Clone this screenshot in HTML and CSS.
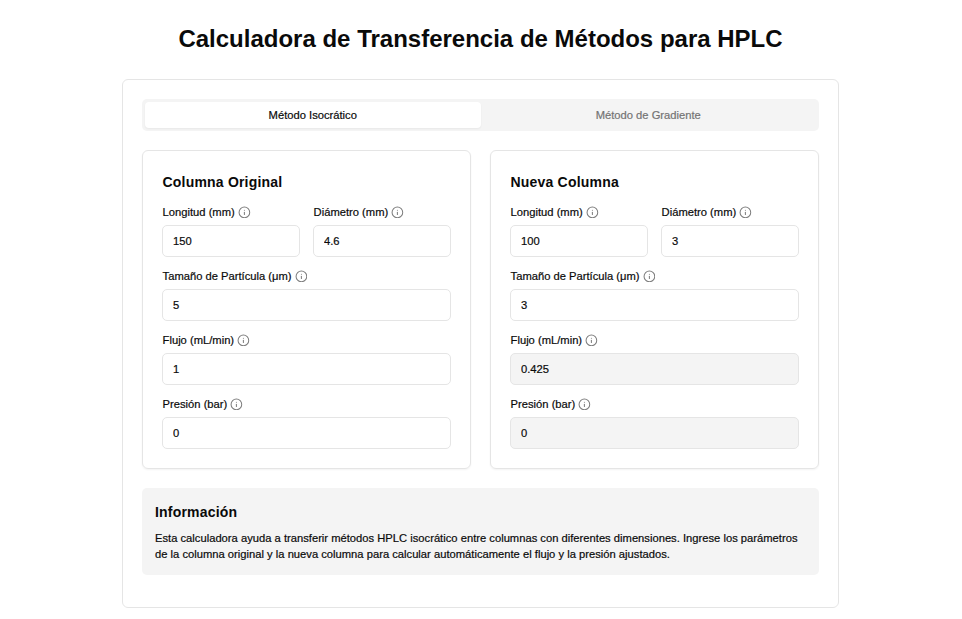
FILE: index.html
```html
<!DOCTYPE html>
<html lang="es">
<head>
<meta charset="utf-8">
<title>Calculadora HPLC</title>
<link rel="stylesheet" href="styles.css">
</head>
<body>
<svg class="sprite" aria-hidden="true"><symbol id="info" viewBox="0 0 24 24"><circle cx="12" cy="12" r="10"/><path d="M12 16v-4"/><path d="M12 8h.01"/></symbol></svg>
<main class="page">
<h1>Calculadora de Transferencia de Métodos para HPLC</h1>
<section class="panel">
<div class="tabs"><button class="tab active">Método Isocrático</button><button class="tab">Método de Gradiente</button></div>
<div class="columns">
<section class="card">
<h2>Columna Original</h2>
<div class="fields">
<div class="pair">
<div class="field"><label>Longitud (mm)<svg class="icon"><use href="#info"/></svg></label><input value="150"></div>
<div class="field"><label>Diámetro (mm)<svg class="icon"><use href="#info"/></svg></label><input value="4.6"></div>
</div>
<div class="field"><label>Tamaño de Partícula (μm)<svg class="icon"><use href="#info"/></svg></label><input value="5"></div>
<div class="field"><label>Flujo (mL/min)<svg class="icon"><use href="#info"/></svg></label><input value="1"></div>
<div class="field"><label>Presión (bar)<svg class="icon"><use href="#info"/></svg></label><input value="0"></div>
</div>
</section>
<section class="card">
<h2>Nueva Columna</h2>
<div class="fields">
<div class="pair">
<div class="field"><label>Longitud (mm)<svg class="icon"><use href="#info"/></svg></label><input value="100"></div>
<div class="field"><label>Diámetro (mm)<svg class="icon"><use href="#info"/></svg></label><input value="3"></div>
</div>
<div class="field"><label>Tamaño de Partícula (μm)<svg class="icon"><use href="#info"/></svg></label><input value="3"></div>
<div class="field"><label>Flujo (mL/min)<svg class="icon"><use href="#info"/></svg></label><input class="result" value="0.425" readonly></div>
<div class="field"><label>Presión (bar)<svg class="icon"><use href="#info"/></svg></label><input class="result" value="0" readonly></div>
</div>
</section>
</div>
<section class="note">
<h2>Información</h2>
<p>Esta calculadora ayuda a transferir métodos HPLC isocrático entre columnas con diferentes dimensiones. Ingrese los parámetros de la columna original y la nueva columna para calcular automáticamente el flujo y la presión ajustados.</p>
</section>
</section>
</main>
</body>
</html>
```
FILE: styles.css
```css
* { box-sizing: border-box; margin: 0; }
body { background: #fff; color: #0a0a0a; font: 500 11.2px/16px "Liberation Sans", Arial, sans-serif; -webkit-text-stroke: 0.2px; }
.sprite { display: none; }
.page { width: 717px; margin-left: 122px; padding-top: 23px; }
h1 { font-size: 24px; line-height: 32px; text-align: center; white-space: nowrap; margin-bottom: 24px; color: #0a0a0a; -webkit-text-stroke: 0; }
.panel { border: 1px solid #e5e5e5; border-radius: 6px; padding: 19px; height: 529px; }
.tabs { display: flex; height: 32px; padding: 3px; background: #f4f4f4; border-radius: 5px; margin-bottom: 19px; }
.tab { flex: 1; border: 0; padding: 0; background: none; border-radius: 4px; font: inherit; color: #737373; }
.tab.active { background: #fff; color: #0a0a0a; box-shadow: 0 1px 2px rgba(0,0,0,.05); }
.columns { display: grid; grid-template-columns: 1fr 1fr; gap: 19px; }
.card { height: 319px; border: 1px solid #e5e5e5; border-radius: 6px; padding: 21px 19px; box-shadow: 0 1px 2px rgba(0,0,0,.05); }
h2 { font-size: 14px; line-height: 21px; letter-spacing: .2px; -webkit-text-stroke: 0; }
.card h2 { padding-left: .5px; }
.fields { display: grid; gap: 8px; margin-top: 11px; }
.pair { display: grid; grid-template-columns: 1fr 1fr; gap: 13px; }
.field { min-width: 0; height: 56px; }
label { display: flex; align-items: center; gap: 3px; height: 16px; margin-bottom: 5px; padding-left: .6px; white-space: nowrap; }
.icon { width: 12.8px; height: 12.8px; fill: none; stroke: #808080; stroke-width: 2; stroke-linecap: round; stroke-linejoin: round; }
input { display: block; width: 100%; height: 32px; border: 1px solid #e5e5e5; border-radius: 5px; padding: 0 10px; background: #fff; font: inherit; color: #0a0a0a; outline: 0; }
.result { background: #f4f4f4; }
.note { height: 87px; margin-top: 19px; padding: 14px 13px 12px; background: #f4f4f4; border-radius: 5px; }
.note p { margin-top: 7px; letter-spacing: .006px; }
```
